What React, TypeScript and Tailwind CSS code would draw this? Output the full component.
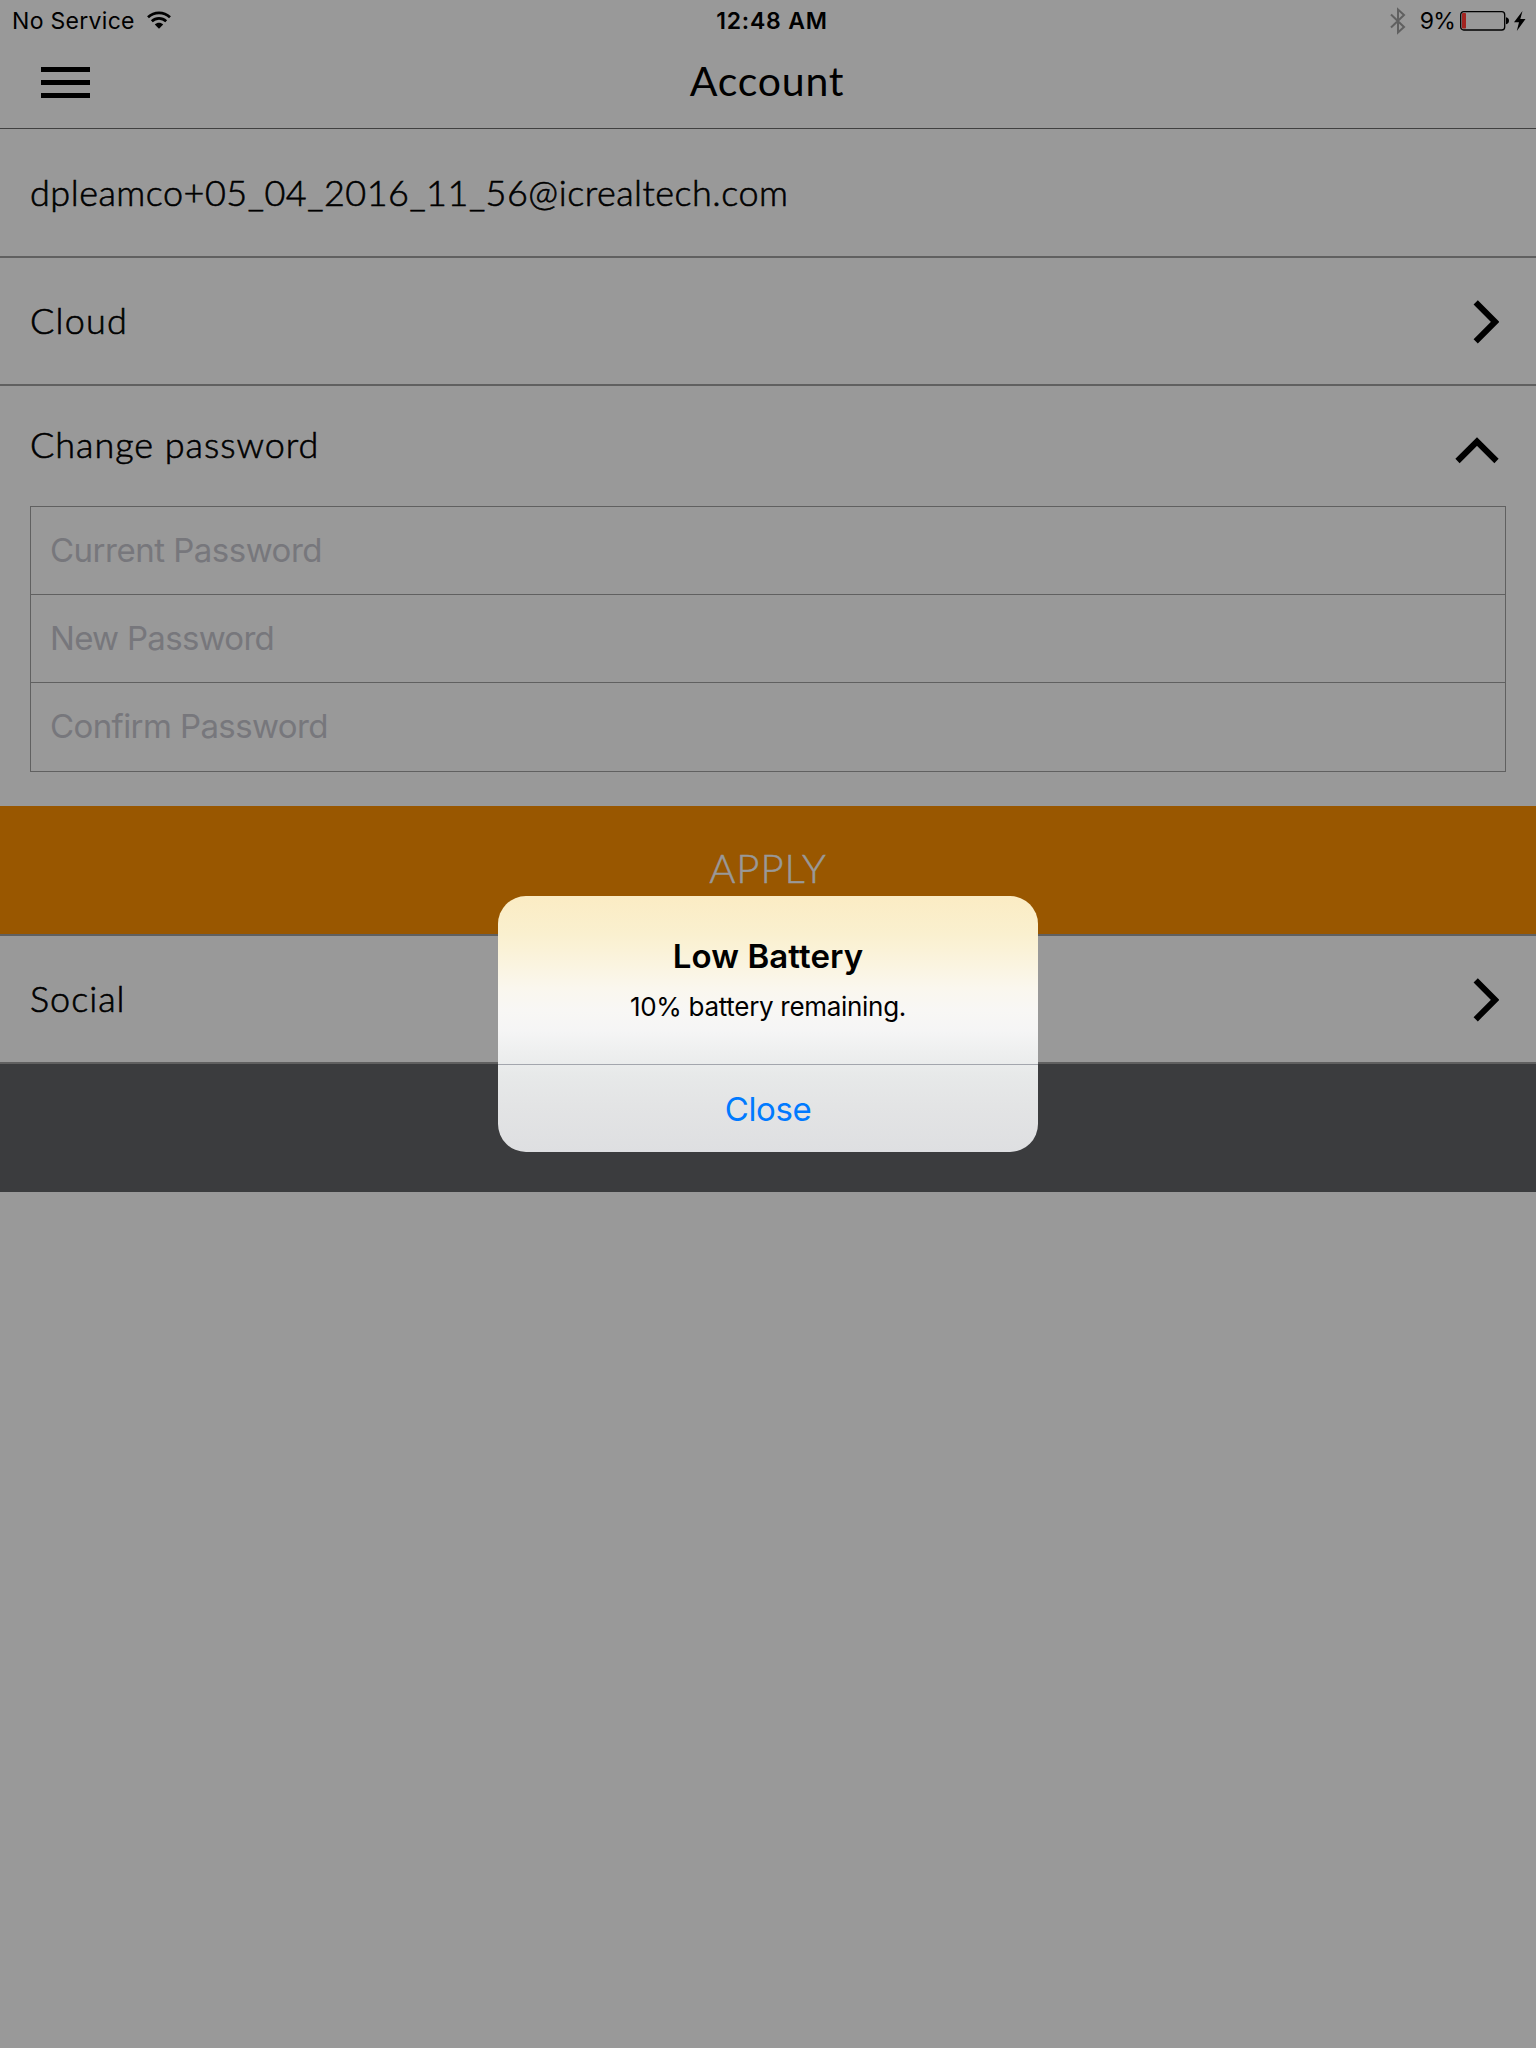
import React from "react";

const PLACEHOLDERS = [
  { text: "Current Password", spacing: "tracking-[-0.5px]" },
  { text: "New Password", spacing: "tracking-[-0.7px]" },
  { text: "Confirm Password", spacing: "tracking-[-0.6px]" },
];

function WifiIcon() {
  return (
    <svg width="24" height="19" viewBox="0 0 24 19" fill="none" stroke="#000" strokeWidth="2.7">
      <path d="M1 6.2C7.2 .4 16.8 .4 23 6.2" />
      <path d="M4.8 10.2C9 6.3 15 6.3 19.2 10.2" />
      <path d="M7.8 13.5C10.2 11.3 13.8 11.3 16.2 13.5L12 17.8Z" fill="#000" stroke="none" />
    </svg>
  );
}

function BluetoothIcon() {
  return (
    <svg width="16" height="28" viewBox="0 0 16 28" fill="none" stroke="#606060" strokeWidth="2">
      <path d="M1 7.5L14 20L8 25.5V2.5L14 8L1 20.5" />
    </svg>
  );
}

function BatteryIcon() {
  return (
    <svg width="50" height="20" viewBox="0 0 50 20" fill="none">
      <rect x="0.7" y="0.7" width="44" height="18.3" rx="3" stroke="#000" strokeWidth="1.3" />
      <rect x="2" y="2" width="4" height="15.5" rx="0.8" fill="#a32420" />
      <path d="M46 6.3C50 6.8 50 12.7 46 13.2Z" fill="#000" />
    </svg>
  );
}

function BoltIcon() {
  return (
    <svg width="12" height="20" viewBox="0 0 12 20" fill="#000">
      <path d="M8.5 0L0 11.2H5L2.8 20L11.5 8H6.3Z" />
    </svg>
  );
}

function ChevronRight() {
  return (
    <svg width="26" height="44" viewBox="0 0 26 44" fill="none" stroke="#000" strokeWidth="6">
      <path d="M2.7 2.3L22.1 21.8L2.7 41.3" />
    </svg>
  );
}

function ChevronUp() {
  return (
    <svg width="44" height="27" viewBox="0 0 44 27" fill="none" stroke="#000" strokeWidth="6">
      <path d="M2.5 24L22 4.6L41.500 24" />
    </svg>
  );
}

export default function App() {
  return (
    <div className="relative h-[2048px] w-[1536px] overflow-hidden bg-[#999999] font-['Lato',sans-serif] text-black">
      <header className="flex h-[129px] flex-col border-b border-[#404040]">
        <div className="grid h-[41px] grid-cols-3 items-center whitespace-nowrap pt-[1px] font-['Inter',sans-serif] text-[23px] leading-[40px]">
          <div className="flex items-center gap-[12px] pl-[12px]">
            <span className="tracking-[0.3px]">No Service</span>
            <span className="-mt-[2px]"><WifiIcon /></span>
          </div>
          <div className="pl-[8px] text-center font-semibold tracking-[0.8px]">12:48 AM</div>
          <div className="flex items-center justify-end pr-[10px]">
            <BluetoothIcon />
            <span className="ml-[14px] tracking-[-0.8px]">9%</span>
            <span className="ml-[5px]"><BatteryIcon /></span>
            <span className="ml-[4px]"><BoltIcon /></span>
          </div>
        </div>
        <div className="grid h-[87px] grid-cols-3 items-center">
          <div className="-mt-[5px] ml-[41px] flex h-[31px] w-[49px] flex-col justify-between">
            <span className="h-[5px] bg-black" />
            <span className="h-[5px] bg-black" />
            <span className="h-[5px] bg-black" />
          </div>
          <h1 className="-mt-[7px] pr-[2px] text-center text-[41px] font-normal leading-[50px] tracking-[0.8px]">Account</h1>
        </div>
      </header>

      <main>
        <div className="flex h-[129px] items-center whitespace-nowrap border-b-2 border-[#606060] pb-[2px] pl-[30px] text-[36px] font-light tracking-[0.5px] [-webkit-text-stroke:0.6px_black]">
          <span>dpleamco+05_04_2016_11_56@icrealtech.com</span>
        </div>
        <div className="flex h-[128px] items-center justify-between border-b-2 border-[#606060] pl-[30px] pr-[37px] text-[36px] font-light tracking-[1.2px] [-webkit-text-stroke:0.6px_black]">
          <span className="pb-[3px]">Cloud</span>
          <span className="mt-[2px]"><ChevronRight /></span>
        </div>

        <section className="h-[420px]">
          <div className="flex h-[120px] items-center justify-between pl-[30px] pr-[37px] text-[36px] font-light tracking-[0.95px] [-webkit-text-stroke:0.6px_black]">
            <span className="pb-[5px]">Change password</span>
            <span className="mt-[8px]"><ChevronUp /></span>
          </div>
          <div className="mx-[30px] border border-[#606060] font-['Inter',sans-serif] text-[33px] text-[#77777c]">
            {PLACEHOLDERS.map((field, i) => (
              <div
                key={field.text}
                className={`flex h-[88px] items-center pl-[19px] ${field.spacing} ${i < 2 ? "border-b border-[#606060]" : ""}`}
              >
                {field.text}
              </div>
            ))}
          </div>
        </section>

        <div className="flex h-[130px] items-center justify-center border-b-2 border-[#606060] bg-[#995700] pb-[5px] text-[40px] font-light tracking-[1px] text-[#999999] [-webkit-text-stroke:0.5px_#999999]">
          <span>APPLY</span>
        </div>
        <div className="flex h-[128px] items-center justify-between border-b-2 border-[#606060] pl-[30px] pr-[37px] text-[36px] font-light tracking-[1px] [-webkit-text-stroke:0.6px_black]">
          <span className="pb-[3px]">Social</span>
          <span className="mt-[2px]"><ChevronRight /></span>
        </div>
        <div className="h-[128px] bg-[#3b3c3e]" />
      </main>

      <div
        role="dialog"
        className="absolute left-[498px] top-[896px] flex h-[256px] w-[540px] flex-col overflow-hidden rounded-[28px] bg-[linear-gradient(180deg,#fbecc4_0%,#faf0cf_15%,#faf4e0_27%,#faf7ee_36%,#f8f7f5_45%,#f5f5f5_53%,#eeefef_61%,#e7e9e9_70%,#e3e4e5_82%,#dedfe1_100%)] text-center font-['Inter',sans-serif]"
      >
        <div className="flex h-[168px] flex-col items-center pt-[40px]">
          <h2 className="text-[33px] font-semibold leading-[40px] tracking-[0.1px]">Low Battery</h2>
          <p className="mt-[15px] text-[26px] leading-[32px] tracking-[-0.3px]">10% battery remaining.</p>
        </div>
        <button className="flex h-[88px] items-center justify-center border-t border-[#a3a6ad] pt-[2px] text-[33px] tracking-[-0.4px] text-[#007aff]">
          Close
        </button>
      </div>
    </div>
  );
}
